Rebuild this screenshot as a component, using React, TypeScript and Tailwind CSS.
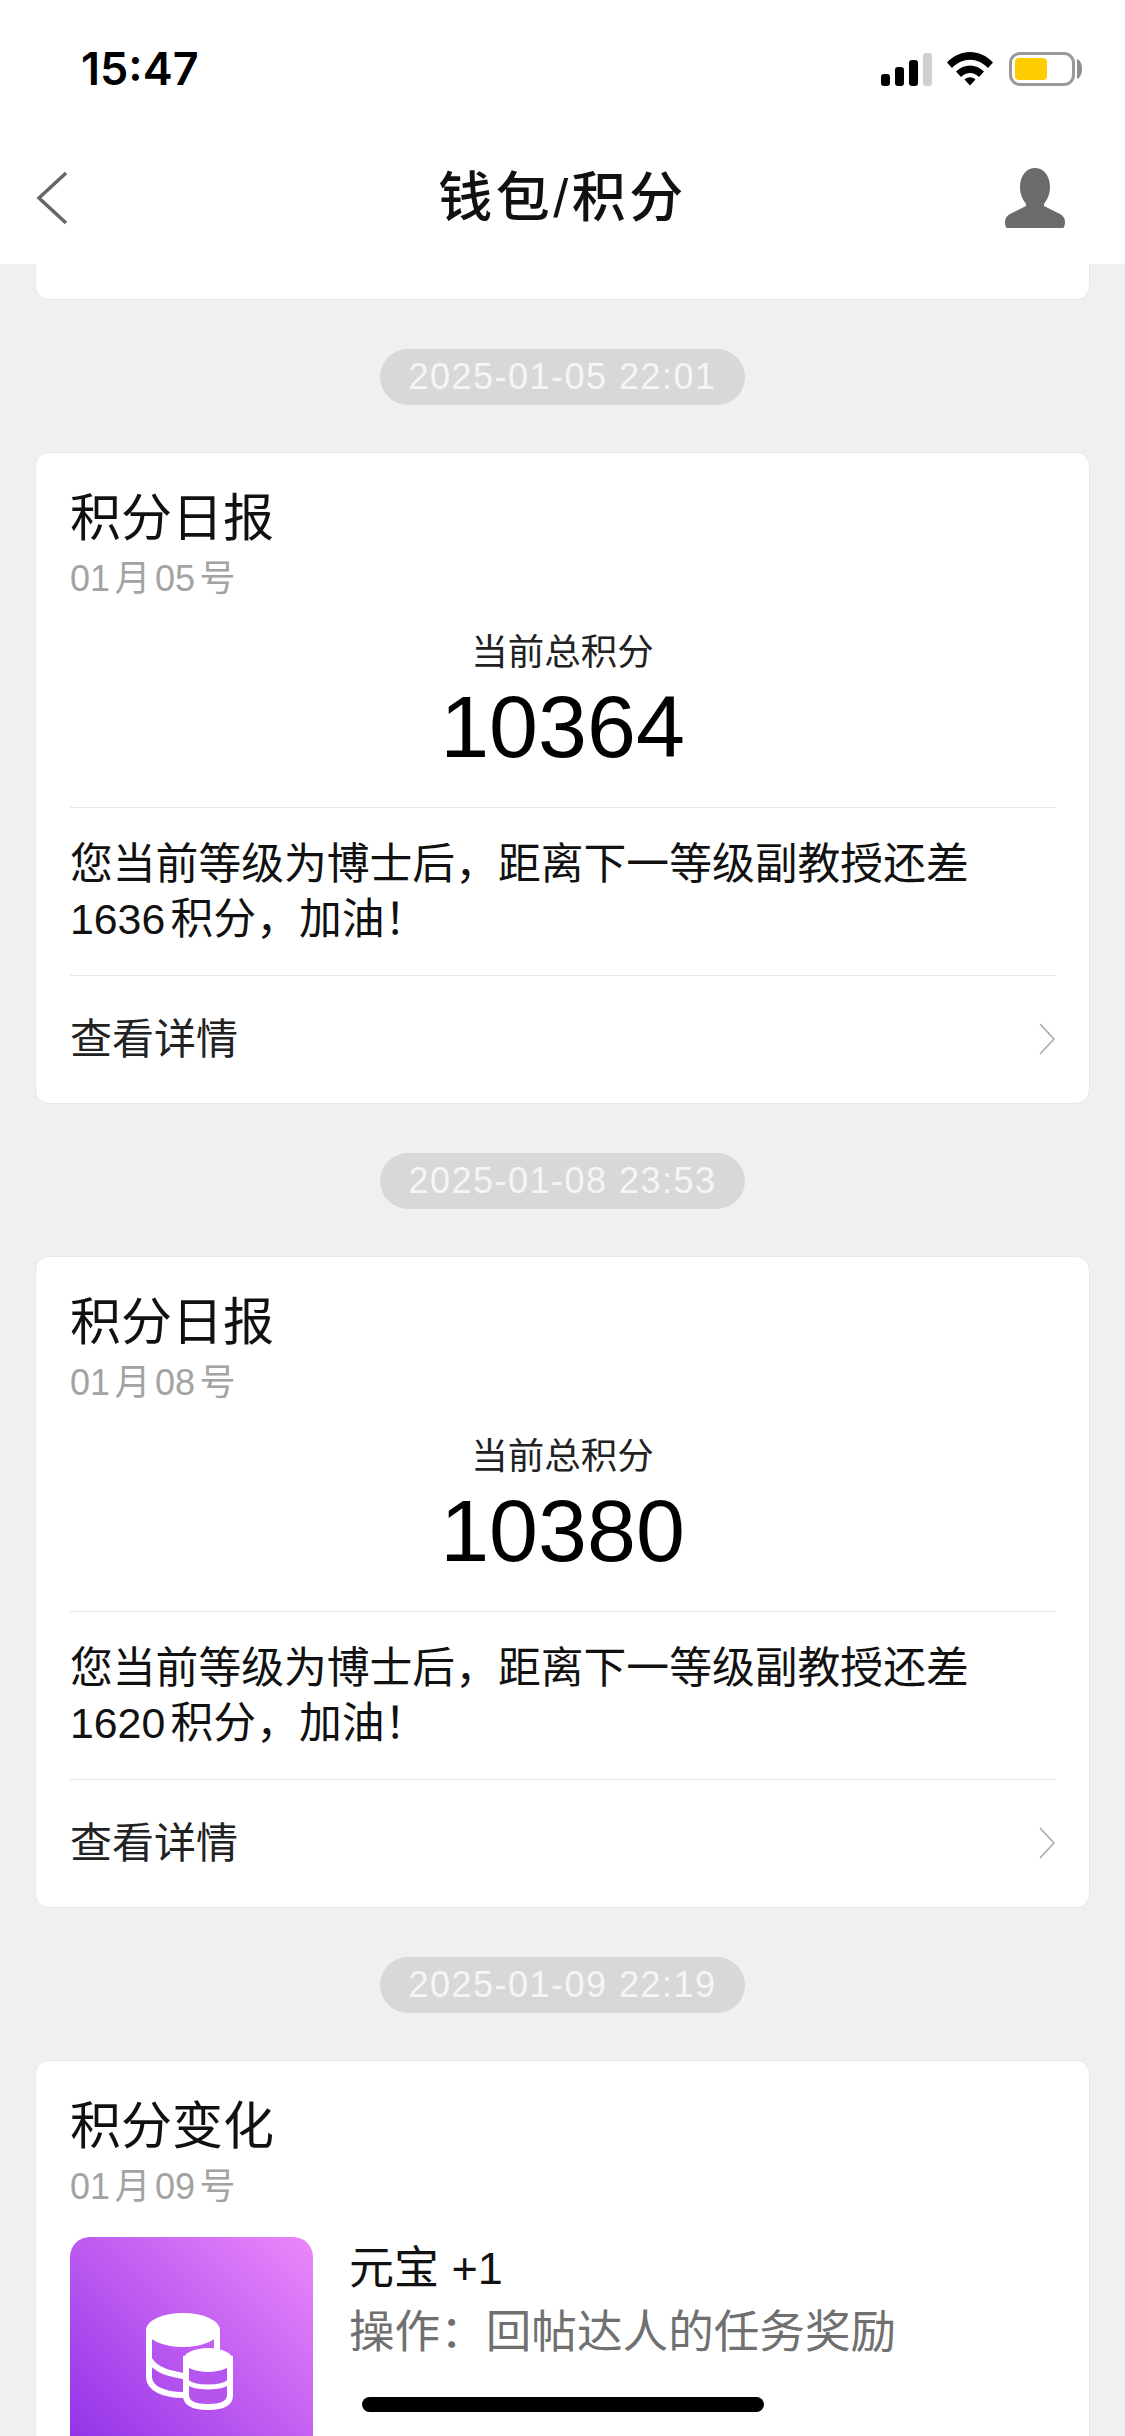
const FONT = "font-['Liberation_Sans','Noto_Sans_CJK_SC',sans-serif] [text-autospace:normal]";

const reports = [
  { stamp: "2025-01-05 22:01", date: "01月05号", total: "10364", gap: "1636" },
  { stamp: "2025-01-08 23:53", date: "01月08号", total: "10380", gap: "1620" },
];

function Pill({ text }: { text: string }) {
  return (
    <div className="flex h-[56px] justify-center">
      <span className="flex items-center rounded-full bg-[#d8d8d8] px-[28px] text-[36px] tracking-[1.5px] text-[#f5f5f5]">
        {text}
      </span>
    </div>
  );
}

function CardHeading({ title, date }: { title: string; date: string }) {
  return (
    <div className="pt-[36px]">
      <div className="text-[51px] leading-[60px] text-[#111]">{title}</div>
      <div className="text-[36px] leading-[60px] text-[#a3a3a3]">{date}</div>
    </div>
  );
}

function ReportCard({ date, total, gap }: { date: string; total: string; gap: string }) {
  return (
    <div className="mx-[35px] h-[652px] rounded-[14px] border border-[#e8e8e8] bg-white px-[34px]">
      <CardHeading title="积分日报" date={date} />
      <div className="mt-[19px] text-center text-[36.5px] leading-[50px] text-[#222]">当前总积分</div>
      <div className="text-center text-[88px] leading-[98px] text-black">{total}</div>
      <div className="mt-[31px] border-t border-[#e6e6e6] pt-[29px] pb-[28px] text-[42.8px] leading-[55px] text-[#111]">
        您当前等级为博士后，距离下一等级副教授还差
        <br />
        {gap}积分，加油！
      </div>
      <div className="flex h-[127px] items-center justify-between border-t border-[#e6e6e6]">
        <span className="text-[42px] text-[#222]">查看详情</span>
        <svg width="16" height="32" viewBox="0 0 16 32" fill="none" stroke="#a8a8a8" strokeWidth="1.6">
          <path d="M1 1l14 15L1 31" />
        </svg>
      </div>
    </div>
  );
}

function StatusIcons() {
  return (
    <div className="flex items-end">
      <svg width="52" height="33" viewBox="0 0 52 33">
        <rect x="0" y="21" width="9" height="12" rx="3" fill="#000" />
        <rect x="14" y="14" width="9" height="19" rx="3" fill="#000" />
        <rect x="28" y="7" width="9" height="26" rx="3" fill="#000" />
        <rect x="42" y="0" width="9" height="33" rx="3" fill="#d0d0d0" />
      </svg>
      <svg className="ml-[14px]" width="46" height="34" viewBox="0 0 46 34">
        <path d="M0 10.5C13-3.5 33-3.5 46 10.5L41 16C30.500 5 15.500 5 5 16Z" fill="#000" />
        <path d="M9 19.500C17 11.500 29 11.500 37 19.500L32 25C26.500 19.500 19.500 19.500 14 25Z" fill="#000" />
        <path d="M17.500 27.500C21 24.500 25 24.500 28.500 27.500L23 33.500Z" fill="#000" />
      </svg>
      <div className="ml-[16px] flex h-[34px] w-[66px] items-stretch rounded-[11px] border-[3px] border-[#999] p-[3px]">
        <div className="w-[32px] rounded-[4px] bg-[#ffcc00]" />
      </div>
      <svg className="mb-[7px] ml-[2px]" width="5" height="20" viewBox="0 0 5 20">
        <path d="M0 0C3 1 5 5 5 10S3 19 0 20Z" fill="#8e8e8e" />
      </svg>
    </div>
  );
}

function CoinTile() {
  return (
    <div className="h-[243px] w-[243px] shrink-0 rounded-[20px] bg-[linear-gradient(45deg,#8b2be6,#ec88fa)]">
      <svg width="243" height="243" viewBox="0 0 243 243" fill="none">
        <path d="M79 93V140C79 152 95 158 113 158C135 158 147 152 147 140V93" stroke="#fff" strokeWidth="6" />
        <path d="M79 122C86 134 100 137 120 140" stroke="#fff" strokeWidth="6" />
        <ellipse cx="113" cy="93" rx="37" ry="17" fill="#fff" />
        <path d="M116 122V158C116 167 126 170 138 170C150 170 160 167 160 158V122Z" fill="#b654ee" stroke="#fff" strokeWidth="6" />
        <path d="M116 144C124 152 152 152 160 144" stroke="#fff" strokeWidth="5" />
        <ellipse cx="138" cy="123" rx="25" ry="12" fill="#fff" />
      </svg>
    </div>
  );
}

function ChangeCard() {
  return (
    <div className="mx-[35px] rounded-[14px] border border-[#e8e8e8] bg-white px-[34px]">
      <CardHeading title="积分变化" date="01月09号" />
      <div className="mt-[20px] flex gap-[36px]">
        <CoinTile />
        <div>
          <div className="text-[45px] leading-[64px] text-[#111]">元宝 +1</div>
          <div className="text-[45.6px] leading-[64px] text-[#707070]">操作：回帖达人的任务奖励</div>
        </div>
      </div>
    </div>
  );
}

export default function App() {
  return (
    <div className={`relative h-[2436px] w-[1125px] overflow-hidden bg-[#f0f0f0] ${FONT}`}>
      <div className="h-[264px] bg-white">
        <div className="flex h-[132px] items-start justify-between pt-[52px] pr-[43px] pl-[81px]">
          <span className="font-['Inter',sans-serif] text-[45px] leading-[34px] font-semibold text-black">15:47</span>
          <StatusIcons />
        </div>
        <div className="flex h-[132px] items-center justify-between pr-[60px] pl-[36px]">
          <div className="w-[84px]">
            <svg width="32" height="54" viewBox="0 0 32 54" fill="none" stroke="#666" strokeWidth="3.500">
              <path d="M30 2L3 27l27 25" />
            </svg>
          </div>
          <span className="text-[54px] font-medium tracking-[3.5px] text-[#111]">钱包/积分</span>
          <svg width="60" height="60" viewBox="0 0 60 60" fill="#6b6b6b">
            <path d="M30 0C38 0 45 7 45 19C45 28 41 33 39 36V38L55 46C58 48 60 50 60 54C60 57 59 60 58 60H2C1 60 0 57 0 54C0 50 2 48 5 46L21 38V36C19 33 15 28 15 19C15 7 22 0 30 0Z" />
          </svg>
        </div>
      </div>

      <div className="mx-[35px] h-[36px] rounded-b-[14px] border-x border-b border-[#e8e8e8] bg-white" />

      <div className="mt-[49px] flex flex-col gap-[49px]">
        {reports.map((r) => (
          <div key={r.stamp} className="flex flex-col gap-[47px]">
            <Pill text={r.stamp} />
            <ReportCard date={r.date} total={r.total} gap={r.gap} />
          </div>
        ))}
        <div className="flex flex-col gap-[47px]">
          <Pill text="2025-01-09 22:19" />
          <ChangeCard />
        </div>
      </div>

      <div className="absolute bottom-[24px] left-[362px] h-[15px] w-[402px] rounded-full bg-black" />
    </div>
  );
}
